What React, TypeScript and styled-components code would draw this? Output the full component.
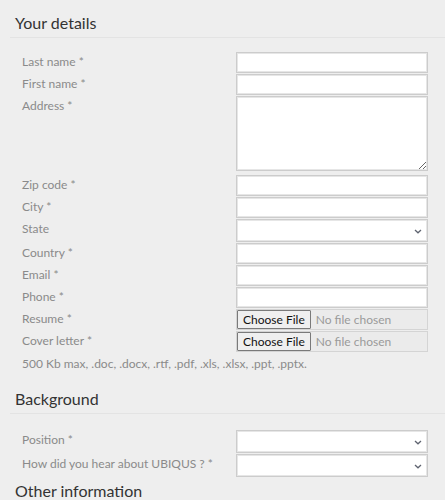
import React from "react";
import styled, { createGlobalStyle } from "styled-components";

const Global = createGlobalStyle`
  html, body { margin: 0; padding: 0; background: #eeeeee; }
  body { font-family: Lato, "Open Sans", sans-serif; }
  * { box-sizing: border-box; }
`;

const Page = styled.div`
  width: 445px;
  display: flex;
  flex-direction: column;
`;

const SectionHeader = styled.div<{ $top: number }>`
  margin-left: 10px;
  padding: ${(p) => p.$top}px 0 4px 5px;
  border-bottom: 1px solid #e3e3e3;
`;

const Title = styled.h2`
  margin: 0;
  font-size: 16px;
  line-height: 20px;
  font-weight: 400;
  color: #333333;
`;

const Fields = styled.div<{ $top: number }>`
  display: flex;
  flex-direction: column;
  gap: 1px;
  padding: ${(p) => p.$top}px 0 0 22px;
`;

const Row = styled.div<{ $after?: number }>`
  display: grid;
  grid-template-columns: 214px 192px;
  align-items: start;
  margin-bottom: ${(p) => p.$after ?? 0}px;
`;

const Label = styled.label`
  font-size: 12px;
  line-height: 20px;
  color: #8a8a8a;
`;

const fieldBorder = `
  border: 1px solid #cccccc;
  box-shadow: inset 0 0 0 1px #e6e6e6;
  background: #ffffff;
  outline: none;
  font-family: Lato, sans-serif;
  font-size: 12px;
`;

const TextInput = styled.input`
  ${fieldBorder}
  display: block;
  width: 192px;
  height: 21px;
  padding: 0 4px;
`;

const TextArea = styled.textarea`
  ${fieldBorder}
  display: block;
  width: 192px;
  height: 75px;
  padding: 2px 4px;
`;

const SelectWrap = styled.div`
  position: relative;
  width: 192px;
  height: 23px;
`;

const Select = styled.select`
  ${fieldBorder}
  appearance: none;
  display: block;
  width: 192px;
  height: 23px;
  padding: 0 4px;
`;

const Chevron = styled.svg`
  position: absolute;
  right: 6px;
  top: 10px;
  pointer-events: none;
`;

const FileInput = styled.input`
  display: block;
  width: 192px;
  height: 21px;
  border: 1px solid #d4d4d4;
  background: #ebebeb;
  color: #9a9a9a;
  font-family: Lato, sans-serif;
  font-size: 12px;
  line-height: 19px;
  padding: 0;
  &::file-selector-button {
    height: 19px;
    margin: 0 5px 0 0;
    padding: 0 5px;
    border: 1px solid #7a7a7a;
    border-radius: 1px;
    background: #efefef;
    color: #111111;
    font-family: Lato, sans-serif;
    font-size: 12px;
  }
`;

const Note = styled.p`
  margin: 2px 0 0 22px;
  font-size: 12px;
  line-height: 20px;
  color: #8a8a8a;
`;

const Dropdown = () => (
  <SelectWrap>
    <Select defaultValue="">
      <option value=""></option>
    </Select>
    <Chevron width="8" height="5" viewBox="0 0 8 5">
      <path d="M1 1l3 2.8L7 1" fill="none" stroke="#5f6470" strokeWidth="1.3" />
    </Chevron>
  </SelectWrap>
);

export default function App() {
  return (
    <Page>
      <Global />
      <SectionHeader $top={13}>
        <Title>Your details</Title>
      </SectionHeader>
      <Fields $top={14}>
        <Row>
          <Label>Last name *</Label>
          <TextInput />
        </Row>
        <Row>
          <Label>First name *</Label>
          <TextInput />
        </Row>
        <Row $after={3}>
          <Label>Address *</Label>
          <TextArea />
        </Row>
        <Row>
          <Label>Zip code *</Label>
          <TextInput />
        </Row>
        <Row>
          <Label>City *</Label>
          <TextInput />
        </Row>
        <Row>
          <Label>State</Label>
          <Dropdown />
        </Row>
        <Row>
          <Label>Country *</Label>
          <TextInput />
        </Row>
        <Row>
          <Label>Email *</Label>
          <TextInput />
        </Row>
        <Row>
          <Label>Phone *</Label>
          <TextInput />
        </Row>
        <Row>
          <Label>Resume *</Label>
          <FileInput type="file" />
        </Row>
        <Row>
          <Label>Cover letter *</Label>
          <FileInput type="file" />
        </Row>
      </Fields>
      <Note>500 Kb max, .doc, .docx, .rtf, .pdf, .xls, .xlsx, .ppt, .pptx.</Note>
      <SectionHeader $top={15}>
        <Title>Background</Title>
      </SectionHeader>
      <Fields $top={16}>
        <Row>
          <Label>Position *</Label>
          <Dropdown />
        </Row>
        <Row>
          <Label>How did you hear about UBIQUS ? *</Label>
          <Dropdown />
        </Row>
      </Fields>
      <SectionHeader $top={4}>
        <Title>Other information</Title>
      </SectionHeader>
    </Page>
  );
}
